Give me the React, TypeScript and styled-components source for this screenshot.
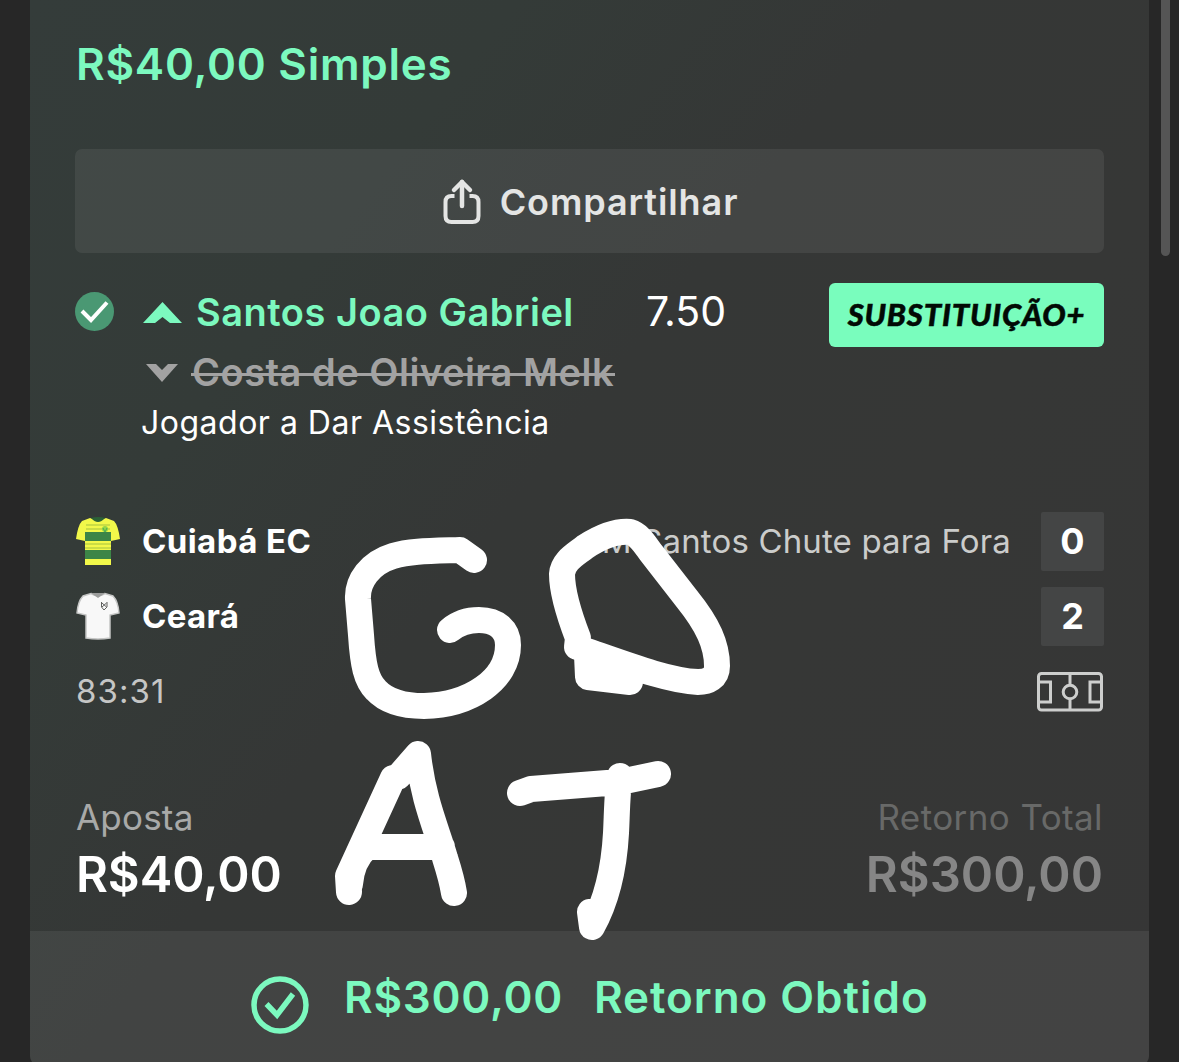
import React from 'react';
import styled, { createGlobalStyle } from 'styled-components';

const GlobalStyle = createGlobalStyle`
  * {
    box-sizing: border-box;
  }

  body {
    margin: 0;
    background: #272727;
    font-family: Inter, 'Liberation Sans', sans-serif;
    overflow: hidden;
  }
`;

const Page = styled.div`
  position: relative;
  display: flex;
  justify-content: space-between;
  width: 1179px;
  height: 1062px;
  padding-left: 30px;
  overflow: hidden;
  background: #272727;
`;

const BetCard = styled.main`
  display: flex;
  flex-direction: column;
  width: 1119px;
  height: 1066px;
  flex-shrink: 0;
  border-radius: 0 0 10px 10px;
  overflow: hidden;
  background: linear-gradient(128deg, #343c3a 0%, #343b38 25%, #353736 45%, #363736 65%, #363636 100%);
`;

const ScrollTrack = styled.div`
  width: 18px;
  height: 256px;
`;

const ScrollThumb = styled.div`
  width: 9px;
  height: 100%;
  border-radius: 0 0 5px 5px;
  background: #555555;
`;

const Line = styled.div<{ $size: number; $weight?: number; $spacing?: number; $color?: string }>`
  font-size: ${props => props.$size}px;
  font-weight: ${props => props.$weight || 400};
  letter-spacing: ${props => props.$spacing || 0}px;
  color: ${props => props.$color || '#ffffff'};
  line-height: 48px;
  white-space: nowrap;
`;

const BetHeader = styled.header`
  height: 149px;
  padding: 40px 46px 0;
`;

const ShareButton = styled.button`
  display: flex;
  align-items: center;
  justify-content: center;
  gap: 19px;
  height: 104px;
  margin: 0 45px;
  padding: 1px 0 0 2px;
  border: none;
  border-radius: 7px;
  background: rgba(255, 255, 255, 0.07);
  font-family: inherit;
`;

const Selection = styled.section`
  display: grid;
  grid-template-columns: 66px 1fr 275px;
  height: 259px;
  padding: 30px 45px 0 45px;
`;

const StatusIcon = styled.div`
  padding-top: 9px;
  line-height: 0;
`;

const Players = styled.div`
  display: flex;
  flex-direction: column;
`;

const PlayerRow = styled.div<{ $height: number }>`
  display: flex;
  align-items: center;
  height: ${props => props.$height}px;
`;

const ArrowSlot = styled.div`
  display: flex;
  justify-content: center;
  width: 42px;
  padding-top: 1px;
`;

const PlayerIn = styled(Line)`
  width: 463px;
  padding-left: 13px;
`;

const Odds = styled(Line)`
  margin-bottom: 2px;
`;

const PlayerOut = styled(Line)`
  position: relative;
  padding: 0 1px 0 9px;

  &::after {
    content: '';
    position: absolute;
    left: 8px;
    right: 0;
    top: 25px;
    height: 3px;
    background: #a2a2a2;
  }
`;

const Market = styled(Line)`
  margin-top: 2px;
`;

const SubTag = styled.div`
  display: flex;
  align-items: center;
  justify-content: center;
  height: 64px;
  padding-bottom: 2px;
  border-radius: 6px;
  background: #79fdbd;
  color: #020a05;
  font-family: Lato, sans-serif;
  font-size: 31px;
  font-style: italic;
  font-weight: 900;
  letter-spacing: 0.8px;
  -webkit-text-stroke: 0.5px #020a05;
`;

const Fixture = styled.section`
  display: flex;
  flex-direction: column;
  height: 281px;
  padding: 0 45px 0 46px;
`;

const FixtureRow = styled.div`
  display: flex;
  align-items: center;
  height: 59px;
  margin-bottom: 16px;
`;

const FixtureText = styled(Line)`
  margin-bottom: 2px;
`;

const TeamKit = styled.div`
  width: 66px;
  line-height: 0;
`;

const Spacer = styled.div`
  flex: 1;
`;

const Score = styled.div`
  display: flex;
  align-items: center;
  justify-content: center;
  width: 63px;
  height: 59px;
  margin-left: 30px;
  padding-bottom: 2px;
  border-radius: 2px;
  background: #444545;
  color: #ffffff;
  font-size: 36px;
  font-weight: 700;
`;

const Totals = styled.section`
  display: flex;
  justify-content: space-between;
  height: 138px;
  padding: 0 46px 0 46px;
`;

const TotalColumn = styled.div<{ $right?: boolean }>`
  display: flex;
  flex-direction: column;
  gap: 10px;
  text-align: ${props => (props.$right ? 'right' : 'left')};
`;

const ReturnBar = styled.footer`
  display: flex;
  height: 135px;
  padding: 42px 0 0 221px;
  background: rgba(255, 255, 255, 0.068);
`;

const ReturnIcon = styled.div`
  width: 93px;
  padding-top: 3px;
  line-height: 0;
`;

const ReturnAmount = styled(Line)`
  width: 250px;
`;

const Scribble = styled.svg`
  position: absolute;
  inset: 0;
  pointer-events: none;
`;

const ShareIcon = () => (
  <svg width="38" height="48" viewBox="0 0 38 48" fill="none" stroke="#e4e5e4" strokeWidth="4">
    <path d="M11.500 18H8.500Q2.500 18 2.500 24V38Q2.500 44 8.500 44H29.500Q35.500 44 35.500 38V24Q35.500 18 29.500 18H26.500" />
    <path d="M19 28V4" strokeLinecap="round" strokeWidth="4.500" />
    <path d="M11 12L19 4L27 12" strokeLinecap="round" strokeLinejoin="round" strokeWidth="4.500" />
  </svg>
);

const CuiabaKit = () => (
  <svg width="44" height="49" viewBox="0 0 44 49">
    <path d="M14 1Q22 5 30 1L38 4Q42 8 44 22L35 24V48H9V24L0 22Q2 8 6 4Z" fill="#f2f84a" />
    <path d="M9 15H35V24H9ZM9 33H35V42H9Z" fill="#3c8547" />
    <path d="M10 8H34M10 12H34M9 27H35M9 31H35" stroke="#bfd343" strokeWidth="1.500" />
    <path d="M15 1Q22 9 29 1Q22 -1 15 1Z" fill="#2b6136" />
    <circle cx="29" cy="12" r="3" fill="#94d646" />
    <path d="M27 11L29 15L31 11" stroke="#4bad55" fill="none" />
  </svg>
);

const CearaKit = () => (
  <svg width="44" height="49" viewBox="0 0 44 49">
    <path
      d="M15 1.500Q22 6 29 1.500L37 4Q42 9 43 21L34 23V46Q22 48 10 46V23L1 21Q2 9 7 4Z"
      fill="#f8f8f8"
      stroke="#c4c5c4"
      strokeWidth="1.500"
    />
    <path d="M15 1L22 6L29 1Z" fill="#9c9d9c" />
    <path d="M25.500 10V15L28 18L31 15V10M26 11L30.500 15M30.500 11L26 15" fill="none" stroke="#60615f" />
  </svg>
);

const PitchIcon = () => (
  <svg width="67" height="40" viewBox="0 0 67 40" fill="none" stroke="#cdcecd" strokeWidth="3">
    <rect x="1.500" y="1.500" width="63" height="36.500" rx="3" />
    <path d="M3 10H13.500V30H3M63.500 10H53V30H63.500" />
    <path d="M33 2V13M33 27V38" />
    <circle cx="33" cy="20" r="6.800" />
  </svg>
);

// hand-drawn marker strokes over the slip
const MarkerStrokes = () => (
  <Scribble
    width="1179"
    height="1062"
    viewBox="0 0 1179 1062"
    fill="none"
    stroke="#ffffff"
    strokeWidth="26"
    strokeLinecap="round"
    strokeLinejoin="round"
  >
    <path d="M474 560L460 550C430 551 410 551 393 556C370 563 357 581 358 599C359 612 360 622 361 635C363 665 366 680 376 690C388 703 406 706 424 706C470 705 508 680 508 645C508 630 497 620 479 620C466 620 457 624 450 630" />
    <path d="M577 647L578 638C568 612 562 592 562 574C563 561 575 555 585 547C602 536 618 531 630 532C640 535 645 545 652 554L687 599C708 625 717 645 717 666C717 678 708 682 698 682C670 681 630 666 587 651" />
    <path d="M587 655L588 677L630 682M600 665L630 678" />
    <path d="M349 892L348 876L393 778L398 777L418 754C423 800 437 830 445 858Q452 880 454 893M364 847H442" />
    <path d="M350 884Q352 860 367 847" />
    <path d="M520 793L531 789L620 782L658 774M620 776C617 790 617 815 616 833C614 870 607 900 592 927L590 912" />
  </Scribble>
);

const App: React.FC = () => {
  return (
    <>
      <GlobalStyle />
      <Page>
        <BetCard>
          <BetHeader>
            <Line $size={44} $weight={600} $spacing={0.75} $color="#7cf9bf">R$40,00 Simples</Line>
          </BetHeader>

          <ShareButton>
            <ShareIcon />
            <Line $size={36} $weight={600} $spacing={0.9} $color="#e4e5e4">Compartilhar</Line>
          </ShareButton>

          <Selection>
            <StatusIcon>
              <svg width="39" height="39" viewBox="0 0 39 39" fill="none">
                <circle cx="19.500" cy="19.500" r="19.500" fill="#4a9873" />
                <path d="M7 19L16 28L32 10.500" stroke="#ffffff" strokeWidth="4" />
              </svg>
            </StatusIcon>
            <Players>
              <PlayerRow $height={58}>
                <ArrowSlot>
                  <svg width="39" height="21" viewBox="0 0 39 21">
                    <path d="M0 21L19.500 0L39 21H27L19.500 15L12 21Z" fill="#7cf9bf" />
                  </svg>
                </ArrowSlot>
                <PlayerIn $size={38} $weight={600} $spacing={0.5} $color="#7cf9bf">Santos Joao Gabriel</PlayerIn>
                <Odds $size={41}>7.50</Odds>
              </PlayerRow>
              <PlayerRow $height={62}>
                <ArrowSlot>
                  <svg width="32" height="18" viewBox="0 0 32 18">
                    <path d="M0 0H10L16 6L22 0H32L16 18Z" fill="#a2a2a2" />
                  </svg>
                </ArrowSlot>
                <PlayerOut $size={38} $weight={600} $spacing={0.5} $color="#a2a2a2">Costa de Oliveira Melk</PlayerOut>
              </PlayerRow>
              <PlayerRow $height={38}>
                <Market $size={32} $spacing={0.5}>Jogador a Dar Assistência</Market>
              </PlayerRow>
            </Players>
            <SubTag>SUBSTITUIÇÃO+</SubTag>
          </Selection>

          <Fixture>
            <FixtureRow>
              <TeamKit><CuiabaKit /></TeamKit>
              <FixtureText $size={33} $weight={700} $spacing={0.4}>Cuiabá EC</FixtureText>
              <Spacer />
              <FixtureText $size={33} $spacing={0.15} $color="#cbcccb">M Santos Chute para Fora</FixtureText>
              <Score>0</Score>
            </FixtureRow>
            <FixtureRow>
              <TeamKit><CearaKit /></TeamKit>
              <FixtureText $size={33} $weight={700} $spacing={0.3}>Ceará</FixtureText>
              <Spacer />
              <Score>2</Score>
            </FixtureRow>
            <FixtureRow>
              <FixtureText $size={33} $spacing={1.1} $color="#c5c6c5">83:31</FixtureText>
              <Spacer />
              <PitchIcon />
            </FixtureRow>
          </Fixture>

          <Totals>
            <TotalColumn>
              <Line $size={35} $spacing={0.2} $color="#a8a9a8">Aposta</Line>
              <Line $size={49} $weight={600} $spacing={-0.1}>R$40,00</Line>
            </TotalColumn>
            <TotalColumn $right>
              <Line $size={35} $spacing={0.4} $color="#686968">Retorno Total</Line>
              <Line $size={49} $weight={600} $color="#868686">R$300,00</Line>
            </TotalColumn>
          </Totals>

          <ReturnBar>
            <ReturnIcon>
              <svg width="58" height="58" viewBox="0 0 58 58" fill="none" stroke="#7cf9bf">
                <circle cx="29" cy="29" r="26" strokeWidth="5.500" />
                <path d="M15.500 28L26 39L42 18" strokeWidth="5.500" />
              </svg>
            </ReturnIcon>
            <ReturnAmount $size={44} $weight={600} $spacing={0.75} $color="#7cf9bf">R$300,00</ReturnAmount>
            <Line $size={44} $weight={600} $spacing={0.95} $color="#7cf9bf">Retorno Obtido</Line>
          </ReturnBar>
        </BetCard>

        <ScrollTrack>
          <ScrollThumb />
        </ScrollTrack>

        <MarkerStrokes />
      </Page>
    </>
  );
};

export default App;
